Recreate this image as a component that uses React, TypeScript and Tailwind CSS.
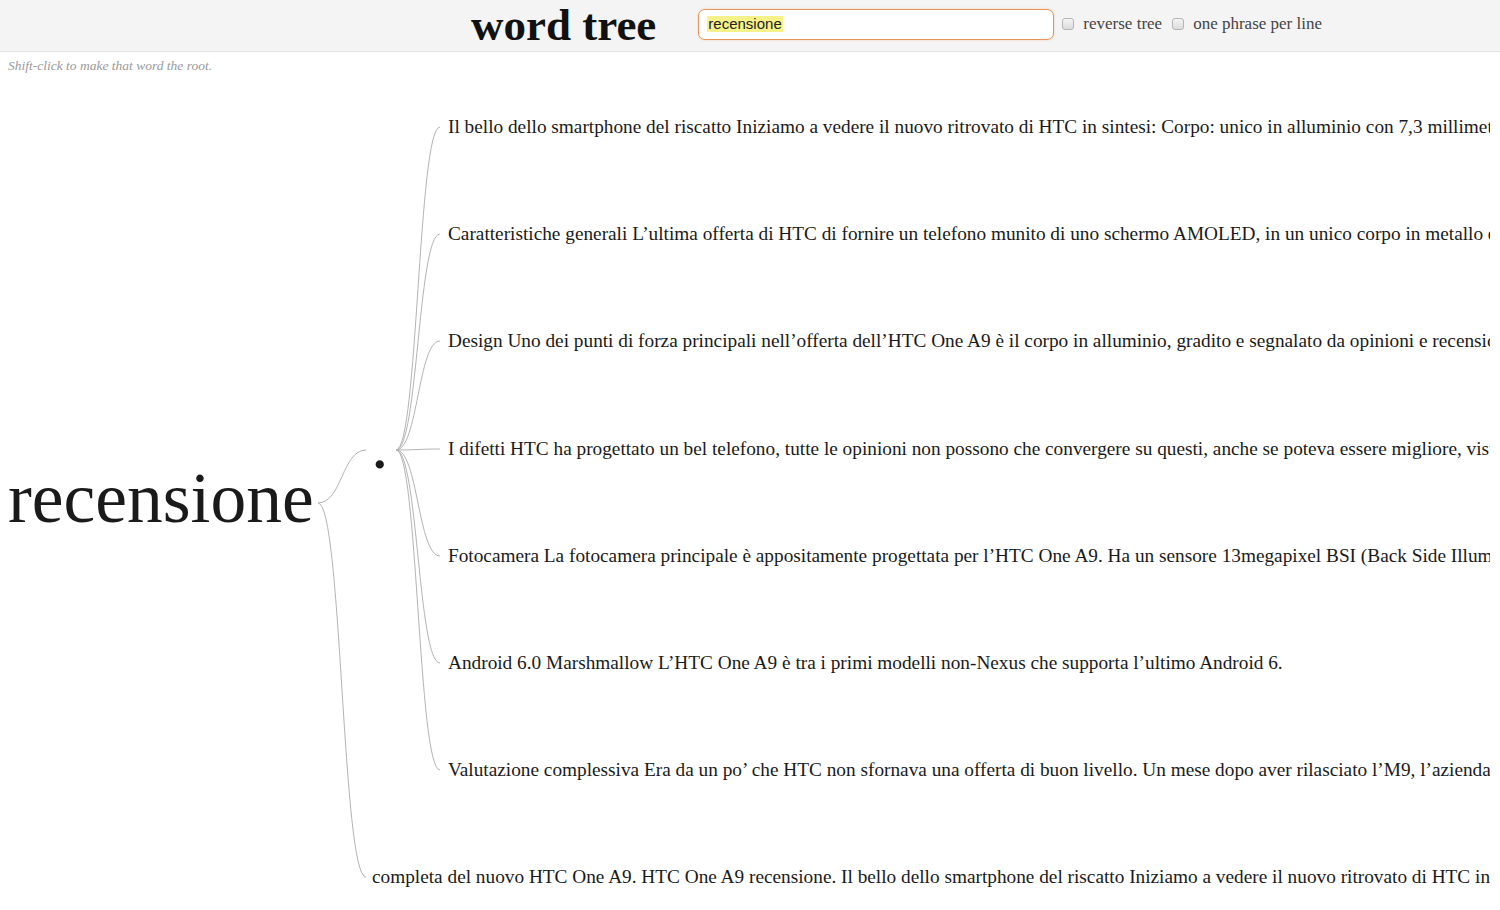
const serif = "font-['Liberation_Serif','Times_New_Roman',serif]";

const branches = [
  "Il bello dello smartphone del riscatto Iniziamo a vedere il nuovo ritrovato di HTC in sintesi: Corpo: unico in alluminio con 7,3 millimetri di spessore e display",
  "Caratteristiche generali L’ultima offerta di HTC di fornire un telefono munito di uno schermo AMOLED, in un unico corpo in metallo e con un design",
  "Design Uno dei punti di forza principali nell’offerta dell’HTC One A9 è il corpo in alluminio, gradito e segnalato da opinioni e recensioni degli utenti",
  "I difetti HTC ha progettato un bel telefono, tutte le opinioni non possono che convergere su questi, anche se poteva essere migliore, vista la concorrenza",
  "Fotocamera La fotocamera principale è appositamente progettata per l’HTC One A9. Ha un sensore 13megapixel BSI (Back Side Illumination) con",
  "Android 6.0 Marshmallow L’HTC One A9 è tra i primi modelli non-Nexus che supporta l’ultimo Android 6.",
  "Valutazione complessiva Era da un po’ che HTC non sfornava una offerta di buon livello. Un mese dopo aver rilasciato l’M9, l’azienda taiwanese",
];

const lastLine =
  "completa del nuovo HTC One A9. HTC One A9 recensione. Il bello dello smartphone del riscatto Iniziamo a vedere il nuovo ritrovato di HTC in sintesi: Corpo";

// tree coordinates are relative to the svg (page y - 80)
const branchY = [47, 154, 261, 369, 476, 583, 690];

function curve(x0: number, y0: number, x1: number, y1: number) {
  const mx = (x0 + x1) / 2;
  return `M${x0},${y0} C${mx},${y0} ${mx},${y1} ${x1},${y1}`;
}

function Checkbox({ label }: { label: string }) {
  return (
    <label className="flex items-center gap-[9px]">
      <span className="w-[12px] h-[12px] rounded-[3px] border border-[#b5b5b5] bg-gradient-to-b from-[#f4f4f4] to-[#dcdcdc]" />
      <span className={`${serif} text-[17px] text-[#444]`}>{label}</span>
    </label>
  );
}

function Header() {
  return (
    <div className="h-[52px] bg-[#f4f4f4] border-b border-[#e2e2e2] flex items-center">
      <h1 className={`${serif} ml-[471px] text-[45px] font-bold text-[#111] leading-[50px] -mt-[2px]`}>
        word tree
      </h1>
      <div className="ml-[42px] w-[356px] h-[31px] rounded-[7px] border-[1.5px] border-[#e6955a] bg-white shadow-[0_0_2px_#f3c7a5] flex items-center pl-[8px] -mt-[3px]">
        <span className="font-['Liberation_Sans',Arial,sans-serif] text-[15px] text-[#222] bg-[#f6f28a] leading-[16px] px-[1px]">
          recensione
        </span>
      </div>
      <div className="ml-[8px] flex items-center gap-[10px] -mt-[3px]">
        <Checkbox label="reverse tree" />
        <Checkbox label="one phrase per line" />
      </div>
    </div>
  );
}

function WordTree() {
  const src = { x: 396, y: 370 };
  return (
    <svg width={1490} height={830} className="block">
      <g fill="none" stroke="#b4b4b4" strokeWidth={1}>
        <path d={curve(318, 423, 366, 370)} />
        <path d={curve(318, 423, 366, 797)} />
        {branchY.map((y) => (
          <path key={y} d={curve(src.x, src.y, 440, y)} />
        ))}
      </g>
      <g className={`${serif} fill-[#1a1a1a]`}>
        <text x={8} y={442} className="text-[71.5px]">
          recensione
        </text>
        <text x={371} y={388} className="text-[70px]">
          .
        </text>
        {branches.map((t, i) => (
          <text key={i} x={448} y={branchY[i] + 6} className="text-[19.3px]">
            {t}
          </text>
        ))}
        <text x={372} y={803} className="text-[19.3px]">
          {lastLine}
        </text>
      </g>
    </svg>
  );
}

export default function App() {
  return (
    <div className="w-[1500px] h-[910px] bg-white overflow-hidden">
      <Header />
      <div className={`${serif} italic text-[13.5px] text-[#9a9a9a] h-[28px] pl-[8px] pt-[4px]`}>
        Shift-click to make that word the root.
      </div>
      <WordTree />
    </div>
  );
}
